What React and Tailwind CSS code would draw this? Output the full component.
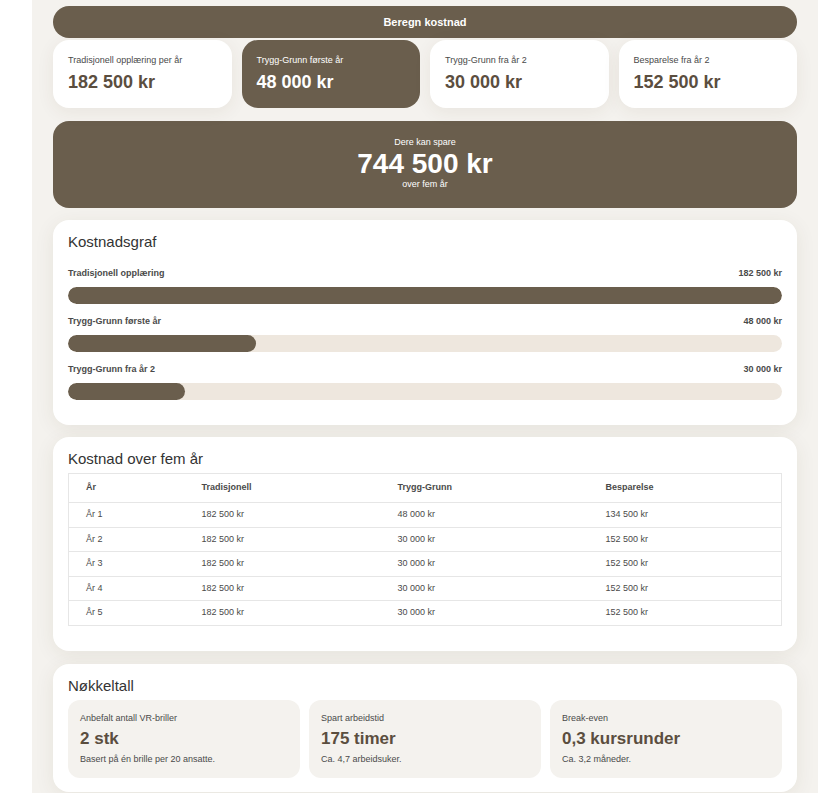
import React from "react";

const font = { fontFamily: '"Liberation Sans", Arial, sans-serif' };

function Stat({ label, value, dark }) {
  return (
    <div
      className={
        "rounded-[16px] h-[68px] pl-[15px] pt-[14px] " +
        (dark ? "bg-[#6a5e4d]" : "bg-white shadow-[0_4px_18px_rgba(80,60,30,0.07)]")
      }
    >
      <div className={"text-[9px] leading-[12px] " + (dark ? "text-white" : "text-[#4a4a4a]")}>{label}</div>
      <div className={"mt-[5px] text-[18px] leading-[22px] font-bold " + (dark ? "text-white" : "text-[#5b4e3f]")}>{value}</div>
    </div>
  );
}

function Bar({ label, value, pct }) {
  return (
    <div className="mb-[11px]">
      <div className="flex justify-between text-[9px] leading-[12px] font-bold text-[#4a4a4a]">
        <span>{label}</span>
        <span>{value}</span>
      </div>
      <div className="mt-[8px] h-[17px] rounded-full bg-[#eee7de] overflow-hidden">
        <div className="h-full rounded-full bg-[#6a5e4d]" style={{ width: pct + "%" }} />
      </div>
    </div>
  );
}

function KeyFig({ label, value, sub }) {
  return (
    <div className="rounded-[12px] bg-[#f4f2ee] h-[78px] pl-[12px] pt-[12px]">
      <div className="text-[9px] leading-[12px] text-[#4a4a4a]">{label}</div>
      <div className="mt-[5px] text-[17px] leading-[20px] font-bold text-[#5b4e3f]">{value}</div>
      <div className="mt-[5px] text-[9px] leading-[10px] text-[#4a4a4a]">{sub}</div>
    </div>
  );
}

const rows = [
  ["År 1", "182 500 kr", "48 000 kr", "134 500 kr"],
  ["År 2", "182 500 kr", "30 000 kr", "152 500 kr"],
  ["År 3", "182 500 kr", "30 000 kr", "152 500 kr"],
  ["År 4", "182 500 kr", "30 000 kr", "152 500 kr"],
  ["År 5", "182 500 kr", "30 000 kr", "152 500 kr"],
];

export default function App() {
  const card = "bg-white rounded-[16px] shadow-[0_4px_20px_rgba(80,60,30,0.08)] px-[15px]";
  return (
    <div className="min-h-[793px] bg-white" style={font}>
      <div className="ml-[32px] w-[786px] min-h-[793px] bg-[#f4f2ee] px-[21px] pt-[6px] pb-[10px]">
        <div className="h-[32px] rounded-full bg-[#6a5e4d] flex items-center justify-center text-white text-[11px] font-bold">
          Beregn kostnad
        </div>
        <div className="mt-[2px] grid grid-cols-4 gap-[10px]">
          <Stat label="Tradisjonell opplæring per år" value="182 500 kr" />
          <Stat label="Trygg-Grunn første år" value="48 000 kr" dark />
          <Stat label="Trygg-Grunn fra år 2" value="30 000 kr" />
          <Stat label="Besparelse fra år 2" value="152 500 kr" />
        </div>
        <div className="mt-[13px] h-[87px] rounded-[16px] bg-[#6a5e4d] text-white flex flex-col items-center pt-[16px]">
          <div className="text-[9px] leading-[10px]">Dere kan spare</div>
          <div className="mt-[3px] text-[28px] leading-[28px] font-bold">744 500 kr</div>
          <div className="mt-[1px] text-[9px] leading-[10px]">over fem år</div>
        </div>

        <div className={card + " mt-[12px] pt-[13px] pb-[14px]"}>
          <div className="text-[15px] leading-[18px] text-[#333]">Kostnadsgraf</div>
          <div className="mt-[16px]">
            <Bar label="Tradisjonell opplæring" value="182 500 kr" pct={100} />
            <Bar label="Trygg-Grunn første år" value="48 000 kr" pct={26.3} />
            <Bar label="Trygg-Grunn fra år 2" value="30 000 kr" pct={16.44} />
          </div>
        </div>

        <div className={card + " mt-[12px] pt-[13px] pb-[25px]"}>
          <div className="text-[15px] leading-[18px] text-[#333]">Kostnad over fem år</div>
          <table className="mt-[5px] w-full border border-[#e6e6e6] border-collapse text-[9px] text-[#4a4a4a] table-fixed">
            <colgroup>
              <col className="w-[116px]" />
              <col className="w-[196px]" />
              <col className="w-[208px]" />
              <col />
            </colgroup>
            <thead>
              <tr className="h-[29px] border-b border-[#e6e6e6]">
                {["År", "Tradisjonell", "Trygg-Grunn", "Besparelse"].map((h) => (
                  <th key={h} className="text-left font-bold pl-[17px]">{h}</th>
                ))}
              </tr>
            </thead>
            <tbody>
              {rows.map((r, i) => (
                <tr key={i} className={"h-[24.6px] " + (i < 4 ? "border-b border-[#e6e6e6]" : "")}>
                  {r.map((c, j) => (
                    <td key={j} className="pl-[17px]">{c}</td>
                  ))}
                </tr>
              ))}
            </tbody>
          </table>
        </div>

        <div className={card + " mt-[13px] pt-[13px] pb-[14px]"}>
          <div className="text-[15px] leading-[18px] text-[#333]">Nøkkeltall</div>
          <div className="mt-[5px] grid grid-cols-3 gap-[9px]">
            <KeyFig label="Anbefalt antall VR-briller" value="2 stk" sub="Basert på én brille per 20 ansatte." />
            <KeyFig label="Spart arbeidstid" value="175 timer" sub="Ca. 4,7 arbeidsuker." />
            <KeyFig label="Break-even" value="0,3 kursrunder" sub="Ca. 3,2 måneder." />
          </div>
        </div>
      </div>
    </div>
  );
}
